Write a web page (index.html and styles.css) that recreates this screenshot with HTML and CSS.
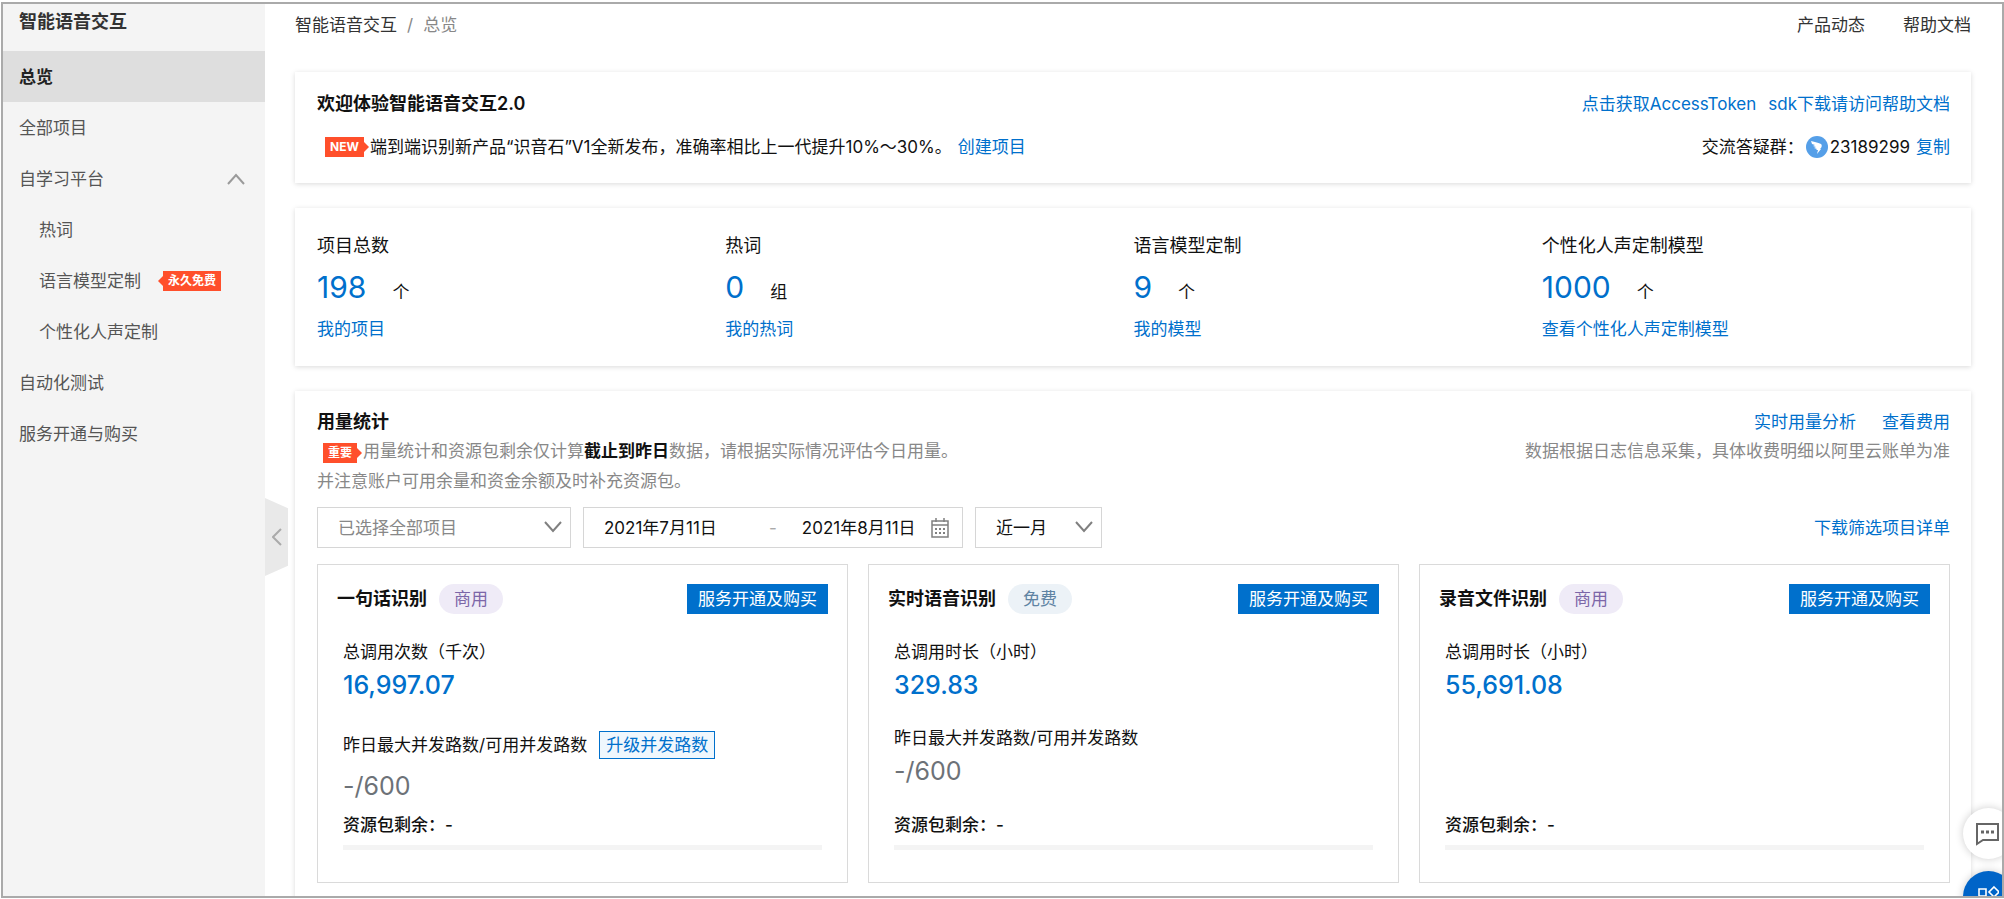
FILE: index.html
```html
<!DOCTYPE html>
<html lang="zh-CN">
<head>
  <meta charset="UTF-8" />
  <title>智能语音交互 - 总览</title>
  <meta name="viewport" content="width=device-width, initial-scale=1.0" />
  <link rel="stylesheet" href="styles.css">
</head>
<body>

<div class="frame">

  <!-- Sidebar -->
  <aside class="sidebar">
    <div class="sidebar-title">智能语音交互</div>
    <nav class="menu">
      <a href="#" class="menu-item active">总览</a>
      <a href="#" class="menu-item">全部项目</a>
      <a href="#" class="menu-item">自学习平台
        <svg class="menu-arrow" width="18" height="12" viewBox="0 0 18 12"><path d="M1 11 L9 2 L17 11" fill="none" stroke="#9a9a9a" stroke-width="2"/></svg>
      </a>
      <a href="#" class="menu-item sub">热词</a>
      <a href="#" class="menu-item sub">语言模型定制 <span class="tag tag-left">永久免费</span></a>
      <a href="#" class="menu-item sub">个性化人声定制</a>
      <a href="#" class="menu-item">自动化测试</a>
      <a href="#" class="menu-item">服务开通与购买</a>
    </nav>
  </aside>

  <button class="collapse-btn" aria-label="收起菜单">
    <svg width="10" height="18" viewBox="0 0 10 18"><path d="M9 1 L1 9 L9 17" fill="none" stroke="#aaa" stroke-width="2"/></svg>
  </button>

  <!-- Main -->
  <main class="main">
    <header class="topbar">
      <div class="breadcrumb">
        <a href="#">智能语音交互</a><span>/</span><span>总览</span>
      </div>
      <div class="top-links">
        <a href="#">产品动态</a>
        <a href="#">帮助文档</a>
      </div>
    </header>

    <section class="card welcome">
      <div class="row">
        <h2>欢迎体验智能语音交互2.0</h2>
        <div class="links">
          <a href="#">点击获取AccessToken</a>
          <a href="#">sdk下载请访问帮助文档</a>
        </div>
      </div>
      <div class="row">
        <div class="news">
          <span class="tag tag-right">NEW</span>
          <span>端到端识别新产品“识音石”V1全新发布，准确率相比上一代提升10%～30%。</span>
          <a href="#">创建项目</a>
        </div>
        <div class="group">
          <span>交流答疑群：</span>
          <svg width="22" height="22" viewBox="0 0 22 22">
            <circle cx="11" cy="11" r="11" fill="#559fe8"/>
            <path d="M5 5 C9 6 13 7 15 8 C16 9 16 10 15 12 L14 13 H15 L11 18 L12 14 H10 L11 13 L8 12 L10 11 L7 10 L9 9 L6 8 Z" fill="#fff"/>
          </svg>
          <span>23189299</span>
          <a href="#">复制</a>
        </div>
      </div>
    </section>

    <section class="card totals">
      <div class="total">
        <div class="total-label">项目总数</div>
        <div class="total-value"><strong>198</strong><span>个</span></div>
        <a href="#">我的项目</a>
      </div>
      <div class="total">
        <div class="total-label">热词</div>
        <div class="total-value"><strong>0</strong><span>组</span></div>
        <a href="#">我的热词</a>
      </div>
      <div class="total">
        <div class="total-label">语言模型定制</div>
        <div class="total-value"><strong>9</strong><span>个</span></div>
        <a href="#">我的模型</a>
      </div>
      <div class="total">
        <div class="total-label">个性化人声定制模型</div>
        <div class="total-value"><strong>1000</strong><span>个</span></div>
        <a href="#">查看个性化人声定制模型</a>
      </div>
    </section>

    <section class="card usage">
      <div class="row">
        <h2>用量统计</h2>
        <div class="links wide">
          <a href="#">实时用量分析</a>
          <a href="#">查看费用</a>
        </div>
      </div>
      <div class="row notes">
        <p><span class="tag tag-right tag-note">重要</span>用量统计和资源包剩余仅计算<b>截止到昨日</b>数据，请根据实际情况评估今日用量。<br>并注意账户可用余量和资金余额及时补充资源包。</p>
        <p>数据根据日志信息采集，具体收费明细以阿里云账单为准</p>
      </div>

      <div class="row filters">
        <div class="filter-group">
          <div class="select-box project-select">
            <select aria-label="项目">
              <option>已选择全部项目</option>
            </select>
            <svg width="18" height="12" viewBox="0 0 18 12"><path d="M1 1 L9 10 L17 1" fill="none" stroke="#808080" stroke-width="2"/></svg>
          </div>
          <div class="date-range">
            <input type="text" class="date-start" value="2021年7月11日" aria-label="开始日期">
            <span>-</span>
            <input type="text" class="date-end" value="2021年8月11日" aria-label="结束日期">
            <svg width="18" height="20" viewBox="0 0 18 20" fill="none" stroke="#808080">
              <path d="M1 3 H17 V19 H1 Z M1 7 H17 M5 0 V4 M13 0 V4" stroke-width="1.5"/>
              <path d="M4 11 H14 M4 15 H14" stroke-width="2" stroke-dasharray="2 2"/>
            </svg>
          </div>
          <div class="select-box period-select">
            <select aria-label="时间范围">
              <option>近一月</option>
            </select>
            <svg width="18" height="12" viewBox="0 0 18 12"><path d="M1 1 L9 10 L17 1" fill="none" stroke="#808080" stroke-width="2"/></svg>
          </div>
        </div>
        <a href="#">下载筛选项目详单</a>
      </div>

      <div class="services">
        <article class="service">
          <div class="service-head">
            <h3>一句话识别</h3>
            <span class="pill">商用</span>
            <button class="buy-btn">服务开通及购买</button>
          </div>
          <div class="metric">
            <div class="metric-label">总调用次数（千次）</div>
            <div class="metric-value">16,997.07</div>
          </div>
          <div class="metric">
            <div class="metric-label with-action">昨日最大并发路数/可用并发路数 <button class="upgrade-btn">升级并发路数</button></div>
            <div class="metric-value muted">-/600</div>
          </div>
          <div class="package">
            <label for="pkg1">资源包剩余：-</label>
            <progress id="pkg1" value="0" max="100"></progress>
          </div>
        </article>

        <article class="service">
          <div class="service-head">
            <h3>实时语音识别</h3>
            <span class="pill free">免费</span>
            <button class="buy-btn">服务开通及购买</button>
          </div>
          <div class="metric">
            <div class="metric-label">总调用时长（小时）</div>
            <div class="metric-value">329.83</div>
          </div>
          <div class="metric">
            <div class="metric-label">昨日最大并发路数/可用并发路数</div>
            <div class="metric-value muted">-/600</div>
          </div>
          <div class="package">
            <label for="pkg2">资源包剩余：-</label>
            <progress id="pkg2" value="0" max="100"></progress>
          </div>
        </article>

        <article class="service">
          <div class="service-head">
            <h3>录音文件识别</h3>
            <span class="pill">商用</span>
            <button class="buy-btn">服务开通及购买</button>
          </div>
          <div class="metric">
            <div class="metric-label">总调用时长（小时）</div>
            <div class="metric-value">55,691.08</div>
          </div>
          <div class="package">
            <label for="pkg3">资源包剩余：-</label>
            <progress id="pkg3" value="0" max="100"></progress>
          </div>
        </article>
      </div>
    </section>
  </main>

  <!-- Floating buttons -->
  <div class="float-btns">
    <button class="float-btn" aria-label="咨询">
      <svg width="24" height="24" viewBox="0 0 24 24">
        <path d="M2 2 H23 V18 H8 L2 22 Z" fill="none" stroke="#666" stroke-width="2"/>
        <path d="M6 10 H9 M11 10 H14 M16 10 H19" stroke="#666" stroke-width="3"/>
      </svg>
    </button>
    <button class="float-btn blue" aria-label="应用">
      <svg width="24" height="24" viewBox="0 0 24 24" fill="none" stroke="#fff" stroke-width="1.6">
        <path d="M4 4 H11 V11 H4 Z M19 2 L24 7 L19 12 L14 7 Z M4 15 H11 V22 H4 Z M15 15 H22 V22 H15 Z"/>
      </svg>
    </button>
  </div>

</div>

</body>
</html>
```
FILE: styles.css
```css
* {
  box-sizing: border-box;
}

body {
  margin: 0;
  padding: 2px 0 1px 1px;
  height: 100vh;
  font-family: Inter, "Noto Sans CJK SC", sans-serif;
  font-size: 17px;
  line-height: 26px;
  color: #111;
  background: #fff;
}

h2, h3, p {
  margin: 0;
}

h2, h3 {
  font-size: 18px;
  font-weight: 600;
}

a {
  color: #0070cc;
  text-decoration: none;
}

button, input, select {
  font: inherit;
  color: inherit;
  cursor: pointer;
}

.frame {
  position: relative;
  display: flex;
  height: 100%;
  border: 2px solid #aaa;
  overflow: hidden;
}

/* sidebar */
.sidebar {
  width: 262px;
  flex-shrink: 0;
  background: #f4f4f4;
}

.sidebar-title {
  padding: 0 16px 11px;
  font-size: 18px;
  font-weight: 600;
  line-height: 36px;
  color: #333;
}

.menu-item {
  display: flex;
  align-items: center;
  height: 51px;
  padding: 0 20px 0 16px;
  color: #555;
}

.menu-item.active {
  background: #dedede;
  color: #222;
  font-weight: 600;
}

.menu-item.sub {
  padding-left: 36px;
}

.menu-arrow {
  margin-left: auto;
}

.tag {
  position: relative;
  padding: 0 5px;
  background: #ff4f2b;
  color: #fff;
  font-size: 12px;
  font-weight: 700;
  line-height: 20px;
}

.tag::after {
  content: "";
  position: absolute;
  top: 5px;
  border: 5px solid transparent;
}

.tag-left {
  margin-left: 22px;
}

.tag-left::after {
  right: 100%;
  border-left: 0;
  border-right-color: #ff4f2b;
}

.tag-right::after {
  left: 100%;
  border-right: 0;
  border-left-color: #ff4f2b;
}

.collapse-btn {
  position: absolute;
  left: 262px;
  top: 494px;
  width: 23px;
  height: 78px;
  padding: 0;
  border: none;
  background: #e9e9e9;
  clip-path: polygon(0 0, 100% 13%, 100% 87%, 0 100%);
}

.collapse-btn svg {
  display: block;
  margin: auto;
}

/* main */
.main {
  flex: 1;
  min-width: 0;
  padding: 0 31px 0 30px;
}

.topbar {
  display: flex;
  justify-content: space-between;
  padding: 8px 0 34px;
}

.topbar a {
  color: #333;
}

.breadcrumb {
  display: flex;
  gap: 10px;
  color: #888;
}

.top-links {
  display: flex;
  gap: 38px;
}

.card {
  margin-bottom: 25px;
  padding: 18px 21px 22px 22px;
  background: #fff;
  box-shadow: 0 1px 5px rgba(0, 0, 0, 0.15);
}

.row {
  display: flex;
  justify-content: space-between;
}

.links {
  display: flex;
  gap: 12px;
}

.links.wide {
  gap: 26px;
}

.welcome .row {
  align-items: center;
  height: 28px;
}

.welcome .row + .row {
  margin-top: 15px;
}

.news {
  display: flex;
  align-items: center;
  gap: 6px;
  padding-left: 8px;
}

.group {
  display: flex;
  align-items: center;
  gap: 2px;
}

.group a {
  margin-left: 4px;
}

.totals {
  display: grid;
  grid-template-columns: repeat(4, 1fr);
  padding-top: 25px;
  padding-bottom: 24px;
}

.total-label {
  font-size: 18px;
}

.total-value {
  display: flex;
  align-items: baseline;
  gap: 26px;
  margin: 8px 0 4px;
  line-height: 40px;
}

.total-value strong {
  font-size: 30px;
  font-weight: 400;
  color: #0070cc;
}

/* usage */
.usage h2 {
  line-height: 26px;
}

.notes {
  margin-top: 1px;
  color: #888;
  line-height: 30px;
}

.notes b {
  color: #111;
}

.tag-note {
  display: inline-block;
  margin: 0 6px;
}

.filters {
  align-items: center;
  margin: 11px 0 16px;
}

.filter-group {
  display: flex;
  gap: 12px;
}

.select-box {
  position: relative;
}

.select-box select {
  width: 100%;
  height: 41px;
  padding: 0 40px 0 20px;
  border: 1px solid #d6d6d6;
  border-radius: 0;
  background: #fff;
  appearance: none;
}

.select-box svg {
  position: absolute;
  right: 9px;
  top: 14px;
  pointer-events: none;
}

.project-select {
  width: 254px;
}

.project-select select {
  color: #888;
}

.period-select {
  width: 127px;
}

.date-range {
  display: flex;
  align-items: center;
  width: 380px;
  height: 41px;
  padding: 0 13px 0 20px;
  border: 1px solid #d6d6d6;
}

.date-range input {
  padding: 0;
  border: none;
  outline: none;
  background: none;
}

.date-range span {
  color: #aaa;
}

.date-start {
  width: 165px;
}

.date-end {
  width: 112px;
  margin-left: 25px;
}

.date-range svg {
  margin-left: auto;
}

.services {
  display: grid;
  grid-template-columns: repeat(3, 1fr);
  gap: 20px;
}

.service {
  display: flex;
  flex-direction: column;
  padding: 19px 19px 32px;
  border: 1px solid #dadada;
}

.service-head {
  display: flex;
  align-items: center;
  margin-bottom: 25px;
}

.pill {
  margin-left: 12px;
  padding: 0 15px;
  border-radius: 15px;
  background: #efebf7;
  color: #7c66a8;
  line-height: 30px;
}

.pill.free {
  background: #ecf2f7;
  color: #5f83a3;
}

.buy-btn {
  height: 30px;
  margin-left: auto;
  padding: 0 11px;
  border: none;
  background: #0070cc;
  color: #fff;
}

.metric {
  padding: 0 6px;
}

.metric + .metric {
  margin-top: 22px;
}

.metric-label.with-action {
  display: flex;
  align-items: center;
  gap: 12px;
  padding: 6px 0 7px;
}

.upgrade-btn {
  height: 28px;
  padding: 0 6px;
  border: 1px solid #0070cc;
  background: #eff7fd;
  color: #0070cc;
  line-height: 26px;
}

.metric-value {
  margin-top: 2px;
  font-size: 25px;
  font-weight: 500;
  line-height: 36px;
  color: #0070cc;
}

.metric-value.muted {
  font-weight: 400;
  color: #6d7278;
}

.package {
  display: flex;
  flex-direction: column;
  gap: 7px;
  margin-top: auto;
  padding: 8px 6px 0;
  font-weight: 500;
}

.package progress {
  width: 100%;
  height: 5px;
  border: none;
  background: #f4f4f4;
  appearance: none;
}

.package progress::-webkit-progress-bar {
  background: #f4f4f4;
}

.package progress::-webkit-progress-value {
  background: #0070cc;
}

/* floating buttons */
.float-btns {
  position: absolute;
  right: -12px;
  bottom: -26px;
  display: flex;
  flex-direction: column;
  gap: 12px;
}

.float-btn {
  width: 51px;
  height: 51px;
  padding: 12px;
  border: none;
  border-radius: 50%;
  background: #fff;
  box-shadow: 0 0 8px rgba(0, 0, 0, 0.2);
}

.float-btn svg {
  display: block;
}

.float-btn.blue {
  background: #0064c8;
}
```
